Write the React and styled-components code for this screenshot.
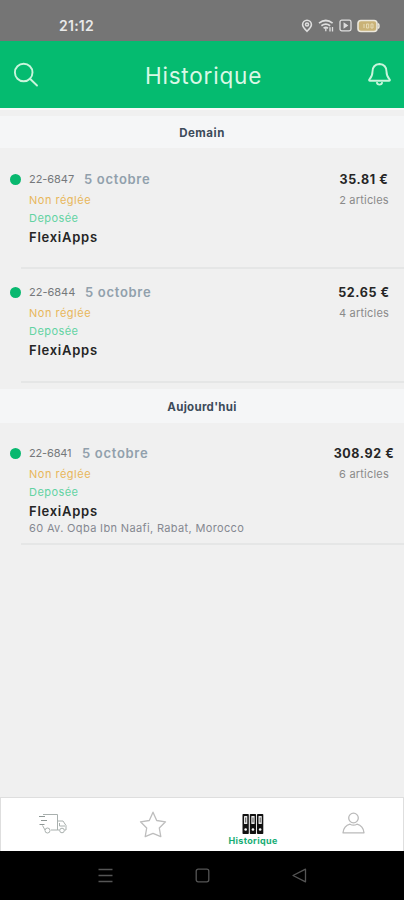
import React from 'react';
import styled, { createGlobalStyle } from 'styled-components';

const GlobalStyle = createGlobalStyle`
  * {
    box-sizing: border-box;
  }
  body {
    margin: 0;
    background-color: #f0f0f0;
    font-family: Inter, 'Open Sans', sans-serif;
  }
`;

const Main = styled.div`
  display: flex;
  flex-direction: column;
  height: 900px;
  overflow: hidden;
  background-color: #f0f0f0;
`;

const StatusBar = styled.div`
  display: flex;
  align-items: center;
  justify-content: space-between;
  flex: none;
  height: 41px;
  padding: 10px 24px 0 59px;
  background-color: #757575;
`;

const Clock = styled.span`
  font-size: 14px;
  font-weight: 600;
  letter-spacing: 0.25px;
  color: #e9e9e9;
`;

const StatusIcons = styled.div`
  display: flex;
  align-items: center;
`;

const Header = styled.header`
  display: flex;
  align-items: center;
  justify-content: space-between;
  flex: none;
  height: 67px;
  padding: 1px 12px 0 13px;
  background-color: #05bb70;
`;

const Title = styled.h1`
  margin: 0 0 0 2px;
  font-size: 22.5px;
  font-weight: 400;
  letter-spacing: 0.8px;
  color: #d9f8e6;
`;

const List = styled.main`
  flex: 1;
  border-top: 2px solid #f8f8f8;
  padding-top: 6px;
`;

const SectionTitle = styled.h2`
  margin: ${props => props.$margin};
  height: ${props => props.$height}px;
  line-height: ${props => props.$height + 2}px;
  font-size: 11.5px;
  font-weight: 700;
  letter-spacing: ${props => props.$spacing}px;
  text-align: center;
  color: #3d4b5a;
  background-color: #f5f6f7;
`;

const Row = styled.article`
  display: flex;
  height: ${props => props.$height}px;
  padding-left: 10px;
`;

const Dot = styled.span`
  flex: none;
  width: 11px;
  height: 11px;
  margin-top: 18px;
  border-radius: 50%;
  background-color: #08b86f;
`;

const Content = styled.div`
  display: flex;
  justify-content: space-between;
  flex: 1;
  padding: 14px 0 0 8px;
  border-bottom: 2px solid #e5e6e6;
`;

const Details = styled.div`
  display: flex;
  flex-direction: column;
`;

const TopLine = styled.div`
  display: flex;
  align-items: center;
  height: 18px;
  margin-bottom: 2px;
`;

const Reference = styled.span`
  width: ${props => props.$width}px;
  font-size: 11px;
  letter-spacing: ${props => props.$spacing}px;
  color: #75787b;
`;

const OrderDate = styled.span`
  font-size: 13px;
  font-weight: 600;
  letter-spacing: 0.7px;
  color: #91a0ac;
`;

const Payment = styled.span`
  line-height: 20px;
  font-size: 11px;
  letter-spacing: 0.5px;
  color: #e8b75b;
`;

const State = styled.span`
  line-height: 16px;
  font-size: 11px;
  letter-spacing: 0.45px;
  color: #62d3a2;
`;

const Customer = styled.span`
  line-height: 23px;
  font-size: 13px;
  font-weight: 600;
  letter-spacing: 0.75px;
  color: #252525;
`;

const Address = styled.span`
  line-height: 10px;
  font-size: 11px;
  letter-spacing: 0.35px;
  color: #858891;
`;

const Amount = styled.div`
  display: flex;
  flex-direction: column;
  align-items: center;
  width: 80px;
`;

const Price = styled.span`
  line-height: 20px;
  font-size: 12.5px;
  font-weight: 700;
  letter-spacing: 0.6px;
  color: #262626;
`;

const Articles = styled.span`
  line-height: 20px;
  font-size: 11px;
  letter-spacing: 0.2px;
  color: #8a8a8a;
`;

const TabBar = styled.nav`
  display: flex;
  flex: none;
  height: 54px;
  padding: 0 0 0 2px;
  border: 1px solid #dedede;
  border-bottom: 0;
  background-color: #fff;
`;

const Tab = styled.div`
  display: flex;
  flex-direction: column;
  align-items: center;
  flex: 1;
  padding-top: ${props => props.$top}px;
`;

const TabLabel = styled.span`
  line-height: 11px;
  font-size: 9px;
  font-weight: 700;
  letter-spacing: 0.35px;
  color: #16ad74;
`;

const SystemBar = styled.div`
  display: flex;
  align-items: center;
  justify-content: center;
  gap: 82px;
  flex: none;
  height: 49px;
  background-color: #000;
`;

const StatusIcon = styled.svg`
  margin-left: ${props => props.$gap}px;
`;

const PinIcon = () => (
  <StatusIcon $gap={0} width="12" height="14" viewBox="0 0 12 14" fill="none" stroke="#dedede" strokeWidth="1.6">
    <path d="M6 12.3C3.5 9.8 1.6 7.8 1.6 5.7a4.4 4.4 0 0 1 8.8 0C10.4 7.8 8.5 9.8 6 12.3z" />
    <circle cx="6" cy="5.5" r="1.5" />
  </StatusIcon>
);

const WifiIcon = () => (
  <StatusIcon $gap={5} width="17" height="14" viewBox="0 0 17 14" fill="none" stroke="#dedede" strokeWidth="1.7">
    <path d="M1 4.2Q7.8-1.2 14.6 4.2M3.4 6.8q4.4-3.2 8.8 0M5.6 9.2q2.2-1.6 4.4 0" />
    <path d="M7.8 9v3.2M12 12.5V8.2M14.5 8v4.5" strokeWidth="1.3" />
  </StatusIcon>
);

const CardIcon = () => (
  <StatusIcon $gap={4} width="13" height="13" viewBox="0 0 13 13" fill="none" stroke="#dedede" strokeWidth="1.3">
    <rect x="1" y="1.2" width="11" height="10.6" rx="1.8" />
    <path d="M5.2 4.5v4l3-2z" fill="#dedede" />
  </StatusIcon>
);

const BatteryIcon = () => (
  <StatusIcon $gap={5} width="23" height="14" viewBox="0 0 23 14">
    <rect x="1" y="1.5" width="19" height="11" rx="3" fill="#c9b277" stroke="#ece8dc" strokeWidth="1.6" />
    <path d="M21.2 4.5q1.6 2.5 0 5" fill="none" stroke="#ece8dc" strokeWidth="1.5" />
    <path d="M7 5v4M9.5 5h2.2v4H9.5zM14 5h2v4h-2z" fill="none" stroke="#e6dab5" strokeWidth="1" />
  </StatusIcon>
);

const SearchIcon = () => (
  <svg width="26" height="26" viewBox="0 0 26 26" fill="none" stroke="#c9f5dc" strokeWidth="1.9" strokeLinecap="round">
    <circle cx="10.7" cy="10.5" r="8.8" />
    <path d="M17 16.8l7 6.7" />
  </svg>
);

const BellIcon = () => (
  <svg width="26" height="26" viewBox="0 0 26 26" fill="none" stroke="#c9f5dc" strokeWidth="1.9" strokeLinejoin="round">
    <path d="M13.5 2c-4.6.4-7 3.3-7 7.6 0 4-1 5.8-3.1 7.8-.6.8-.3 1.4.6 1.4h19c.9 0 1.200-.6.6-1.400-2.100-2-3.100-3.800-3.100-7.800 0-4.300-2.400-7.200-7-7.600z" />
    <path d="M10.8 20.2c.4 3.2 5 3.2 5.400 0" />
  </svg>
);

const TruckIcon = () => (
  <svg width="30" height="22" viewBox="0 0 30 22" fill="none" stroke="#a9b0ae" strokeWidth="1">
    <path d="M5 1.5h14.5V17H13M4.5 12.5L7 17" />
    <path d="M1 3.5h6M3 7.5h6M1.5 11.5h5" stroke="#8f9896" />
    <path d="M19.5 8h5.5l3 4.5V17h-1.5M21.5 10v3h5.5M19.5 17h2" />
    <circle cx="9.5" cy="17.5" r="2.5" />
    <circle cx="24" cy="17.5" r="2.3" />
  </svg>
);

const StarIcon = () => (
  <svg width="28" height="27" viewBox="0 0 28 27" fill="none" stroke="#bdbdbd" strokeWidth="1.3" strokeLinejoin="round">
    <path d="M14 1.2l3.7 8.3 8.8 1.3-6.2 6.2 1.5 8.7-7.8-3.4-7.8 3.4 1.5-8.7-6.2-6.2 8.8-1.3z" />
  </svg>
);

const BindersIcon = () => (
  <svg width="22" height="22" viewBox="0 0 22 22">
    {[0.5, 7.8, 15].map(x => (
      <g key={x} transform={`translate(${x} 1)`}>
        <rect width="6.3" height="20" rx="0.8" fill="#111" />
        <rect x="1.5" y="2" width="3.3" height="8" rx="0.5" fill="#e7e7e7" />
        <path d="M3.2 3.5v5" stroke="#555" strokeWidth="1" />
        <circle cx="3.15" cy="15.5" r="1.3" fill="#fff" />
      </g>
    ))}
  </svg>
);

const UserIcon = () => (
  <svg width="24" height="23" viewBox="0 0 24 23" fill="none" stroke="#bababa" strokeWidth="1.3" strokeLinejoin="round">
    <circle cx="12.5" cy="6" r="4.8" />
    <path d="M9 12.2C5 13.2 2.5 16 2 20.8h21C22.500 16 20 13.200 16 12.200q-3.500 2-7 0z" />
  </svg>
);

const sections = [
  {
    title: 'Demain',
    height: 32,
    margin: '0 0 8px',
    spacing: 0.5,
    orders: [
      { id: '22-6847', width: 55, spacing: -0.05, price: '35.81 €', articles: '2 articles', height: 113 },
      { id: '22-6844', width: 56, spacing: 0, price: '52.65 €', articles: '4 articles', height: 114 }
    ]
  },
  {
    title: "Aujourd'hui",
    height: 34,
    margin: '6px 0 7px',
    spacing: 0.3,
    orders: [
      { id: '22-6841', width: 53, spacing: -0.15, price: '308.92 €', articles: '6 articles', height: 115, address: '60 Av. Oqba Ibn Naafi, Rabat, Morocco' }
    ]
  }
];

const Order = ({ order }) => (
  <Row $height={order.height}>
    <Dot />
    <Content>
      <Details>
        <TopLine>
          <Reference $width={order.width} $spacing={order.spacing}>{order.id}</Reference>
          <OrderDate>5 octobre</OrderDate>
        </TopLine>
        <Payment>Non réglée</Payment>
        <State>Deposée</State>
        <Customer>FlexiApps</Customer>
        {order.address && <Address>{order.address}</Address>}
      </Details>
      <Amount>
        <Price>{order.price}</Price>
        <Articles>{order.articles}</Articles>
      </Amount>
    </Content>
  </Row>
);

const App = () => (
  <Main>
    <GlobalStyle />
    <StatusBar>
      <Clock>21:12</Clock>
      <StatusIcons>
        <PinIcon />
        <WifiIcon />
        <CardIcon />
        <BatteryIcon />
      </StatusIcons>
    </StatusBar>
    <Header>
      <SearchIcon />
      <Title>Historique</Title>
      <BellIcon />
    </Header>
    <List>
      {sections.map(section => (
        <section key={section.title}>
          <SectionTitle $height={section.height} $margin={section.margin} $spacing={section.spacing}>
            {section.title}
          </SectionTitle>
          {section.orders.map(order => <Order key={order.id} order={order} />)}
        </section>
      ))}
    </List>
    <TabBar>
      <Tab $top={15}><TruckIcon /></Tab>
      <Tab $top={13}><StarIcon /></Tab>
      <Tab $top={15}>
        <BindersIcon />
        <TabLabel>Historique</TabLabel>
      </Tab>
      <Tab $top={14}><UserIcon /></Tab>
    </TabBar>
    <SystemBar>
      <svg width="15" height="15" viewBox="0 0 15 15" stroke="#555" strokeWidth="1.5">
        <path d="M0.5 1.5h14M0.5 7.5h14M0.5 13.5h14" />
      </svg>
      <svg width="15" height="15" viewBox="0 0 15 15" fill="none" stroke="#555" strokeWidth="1.3">
        <rect x="1.2" y="1.2" width="12.6" height="12.6" rx="2" />
      </svg>
      <svg width="15" height="15" viewBox="0 0 15 15" fill="none" stroke="#555" strokeWidth="1.3" strokeLinejoin="round">
        <path d="M13.5 1.2v12.6L1 7.5z" />
      </svg>
    </SystemBar>
  </Main>
);

export default App;
